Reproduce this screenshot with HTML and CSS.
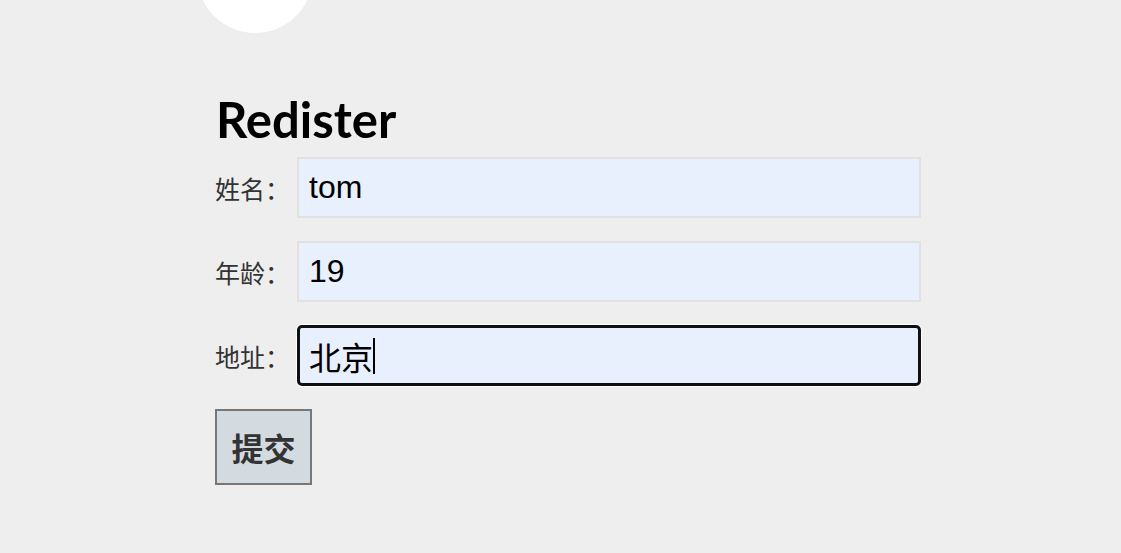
FILE: index.html
```html
<!DOCTYPE html>
<html lang="zh">
<head>
<meta charset="utf-8">
<title>Redister</title>
<link rel="stylesheet" href="styles.css">
</head>
<body>
<div class="page">
  <div class="avatar"></div>
  <h1 class="title">Redister</h1>
  <form class="form">
    <div class="row">
      <label class="label">姓名：</label>
      <div class="field">tom</div>
    </div>
    <div class="row">
      <label class="label">年龄：</label>
      <div class="field">19</div>
    </div>
    <div class="row">
      <label class="label">地址：</label>
      <div class="field focused">北京<span class="caret"></span></div>
    </div>
    <button type="button" class="submit">提交</button>
  </form>
</div>
</body>
</html>
```

FILE: styles.css
```css
html, body {
  margin: 0;
  padding: 0;
  background: #eeeeee;
  height: 100%;
  overflow: hidden;
}
.page {
  padding-left: 215px;
  width: 706px;
}
.avatar {
  width: 116px;
  height: 116px;
  border-radius: 50%;
  background: #ffffff;
  margin-top: -83px;
  margin-left: -18px;
  filter: blur(0.6px);
}
.title {
  margin: 56px 0 0 1px;
  font-family: "Lato", "Open Sans", sans-serif;
  font-weight: 700;
  font-size: 49px;
  line-height: 60px;
  color: #000;
}
.form {
  margin-top: 8px;
}
.row {
  display: flex;
  align-items: center;
  margin-bottom: 23px;
}
.label {
  width: 82px;
  font-family: "Noto Sans CJK SC", sans-serif;
  font-size: 25px;
  color: #333;
  white-space: nowrap;
}
.field {
  flex: 1;
  box-sizing: border-box;
  height: 61px;
  border: 2px solid #e1e1e1;
  background: #e8f0fe;
  padding: 0 10px;
  display: flex;
  align-items: center;
  font-family: "Liberation Sans", Arial, "Noto Sans CJK SC", sans-serif;
  font-size: 32px;
  color: #000;
}
.field.focused {
  border-color: #101010;
  border-width: 3px;
  border-radius: 5px;
  padding-left: 9px;
  box-shadow: 0 0 0 1px #ffffff;
}
.caret {
  display: inline-block;
  width: 2px;
  height: 36px;
  background: #000;
}
.submit {
  box-sizing: border-box;
  width: 97px;
  height: 76px;
  border: 2px solid #777777;
  background: #d3dbe1;
  font-family: "Noto Sans CJK SC", sans-serif;
  font-weight: 700;
  font-size: 32px;
  color: #333;
  padding: 0;
}
```
